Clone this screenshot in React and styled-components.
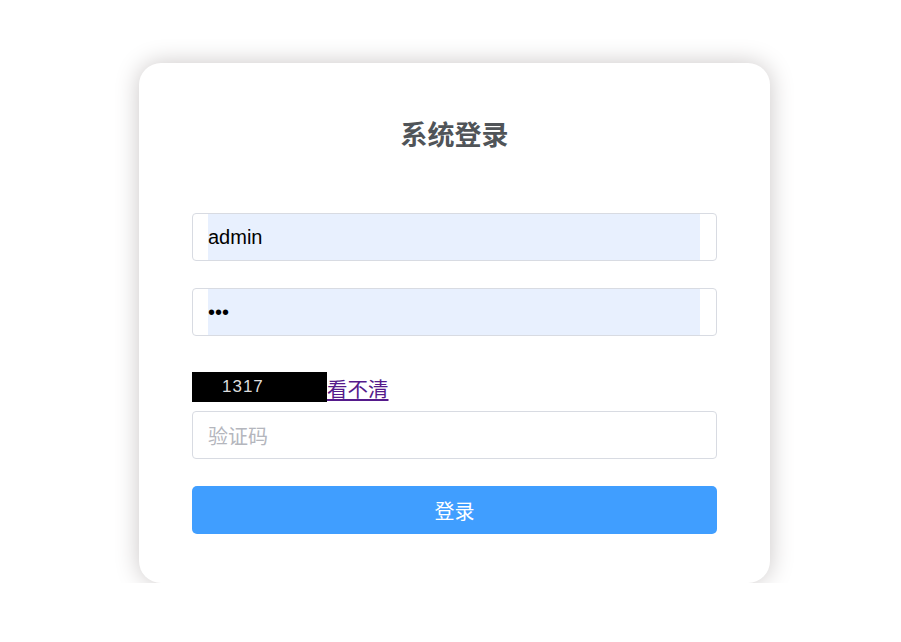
import React from 'react'
import { styled, createGlobalStyle } from 'styled-components';

const Global = createGlobalStyle`
  body {
    margin: 0;
    background: #fff;
    font-family: "Liberation Sans", Arial, "Noto Sans CJK SC", sans-serif;
  }
`;

function App() {
  return (
    <>
      <Global />
      <Page>
        <Card>
          <Title>系统登录</Title>
          <Field $gap={27}>
            <Inner $filled>admin</Inner>
          </Field>
          <Field $gap={36}>
            <Inner $filled>•••</Inner>
          </Field>
          <CaptchaRow>
            <Captcha>1317</Captcha>
            <Refresh href="#">看不清</Refresh>
          </CaptchaRow>
          <Field $gap={27}>
            <Inner $placeholder>验证码</Inner>
          </Field>
          <Button>登录</Button>
        </Card>
      </Page>
    </>
  );
}

const Page = styled.div`
  display: flex;
  justify-content: center;
  padding-top: 63px;
  padding-left: 8px;
`;
const Card = styled.div`
  width: 631px;
  box-sizing: border-box;
  padding: 52px 53px 49px;
  background: #fff;
  border-radius: 22px;
  box-shadow: 0 0 25px #cac6c6;
  display: flex;
  flex-direction: column;
`;
const Title = styled.h3`
  margin: 0 0 60px;
  text-align: center;
  font-family: "Noto Sans CJK SC", sans-serif;
  font-size: 27px;
  line-height: 38px;
  font-weight: 700;
  color: #505458;
`;
const Field = styled.div`
  height: 48px;
  box-sizing: border-box;
  border: 1px solid #d8dbe2;
  border-radius: 4px;
  padding: 0 16px 0 15px;
  margin-bottom: ${p => p.$gap}px;
  display: flex;
`;
const Inner = styled.div`
  flex: 1;
  display: flex;
  align-items: center;
  background: ${p => (p.$filled ? '#e8f0fe' : 'transparent')};
  color: ${p => (p.$placeholder ? '#b4b6bd' : '#000')};
  font-family: ${p => (p.$placeholder ? '"Noto Sans CJK SC", sans-serif' : '"Liberation Sans", Arial, sans-serif')};
  font-size: 20px;
`;
const CaptchaRow = styled.div`
  display: flex;
  align-items: flex-end;
  height: 30px;
  margin-bottom: 9px;
`;
const Captcha = styled.div`
  width: 135px;
  height: 30px;
  background: #000;
  color: #ddd;
  font-family: "Liberation Sans", Arial, sans-serif;
  font-size: 17px;
  line-height: 30px;
  padding-left: 30px;
  box-sizing: border-box;
  letter-spacing: 1px;
`;
const Refresh = styled.a`
  font-family: "Noto Sans CJK SC", sans-serif;
  font-size: 20.5px;
  line-height: 26px;
  color: #551a8b;
  text-decoration: underline;
  margin-bottom: 1px;
`;
const Button = styled.button`
  height: 48px;
  border: none;
  border-radius: 5px;
  background: #409eff;
  color: #fff;
  font-family: "Noto Sans CJK SC", sans-serif;
  font-size: 20px;
`;

export default App
